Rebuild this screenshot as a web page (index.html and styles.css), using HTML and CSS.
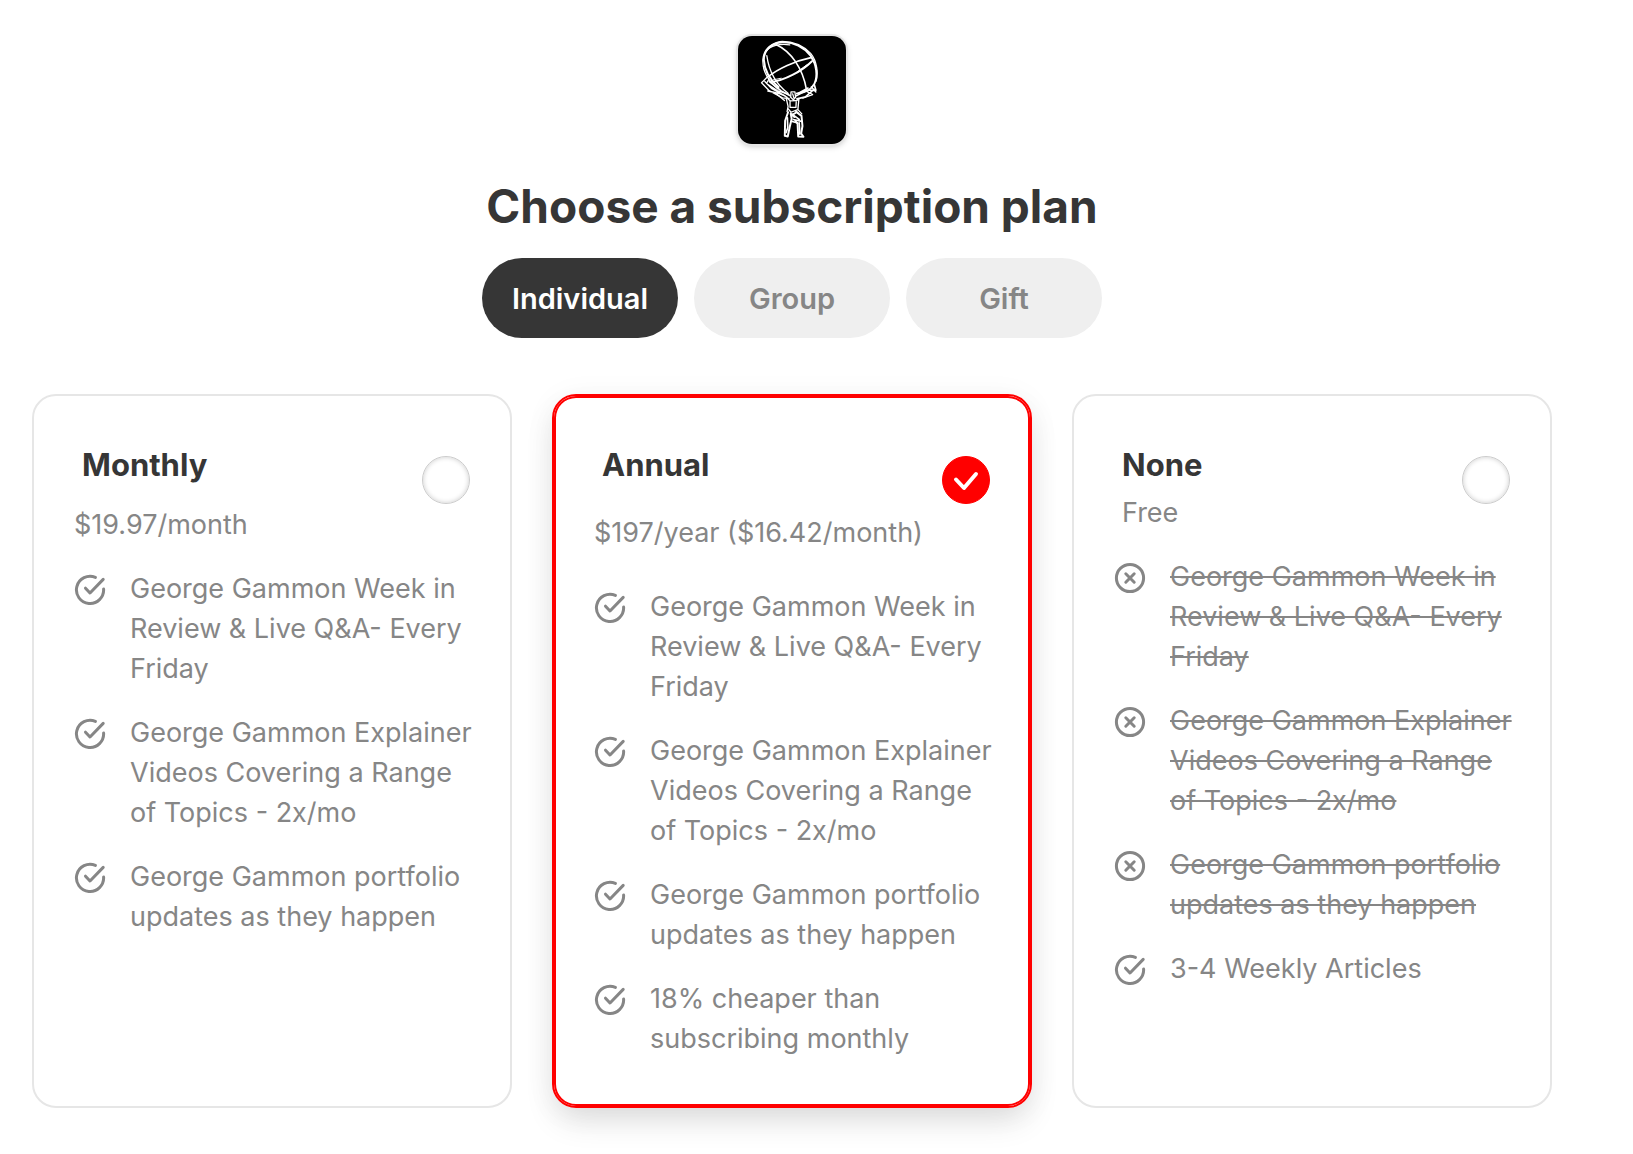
FILE: index.html
```
<!DOCTYPE html>
<html lang="en">
<head>
  <meta charset="UTF-8">
  <meta name="viewport" content="width=device-width, initial-scale=1.0">
  <title>Choose a subscription plan</title>
  <link rel="stylesheet" href="styles.css">
</head>
<body>
  <!-- shared icons -->
  <svg class="sprite" aria-hidden="true">
    <symbol id="icon-check" viewBox="0 0 32 32">
      <path d="M21.4 3.4A13.6 13.6 0 1 0 29.6 15"/>
      <path d="M11.5 14.2L16 19L29.2 5.4"/>
    </symbol>
    <symbol id="icon-cross" viewBox="0 0 32 32">
      <circle cx="16" cy="16" r="13.6"/>
      <path d="M11.8 11.8L20.2 20.2M20.2 11.8L11.8 20.2"/>
    </symbol>
  </svg>

  <main class="page">
    <svg class="logo" viewBox="52 46 330 328" role="img" aria-label="Atlas holding a globe">
      <g fill="none" stroke="#fff" stroke-linecap="round" stroke-linejoin="round">
        <!-- globe -->
        <path stroke-width="6" d="M176 201C150 180 133 150 131 118C131 87 155 66 188 64C222 62 254 80 273 104C293 133 296 166 286 190C277 209 258 219 232 221"/>
        <path stroke-width="4" d="M174 207C144 182 126 150 128 116C132 84 152 68 180 62C218 60 250 74 274 98C294 122 298 162 290 184"/>
        <path stroke-width="4" d="M140 105C146 148 162 188 205 220M138 92C150 74 180 68 210 72"/>
        <path stroke-width="5" d="M168 71C214 92 250 144 261 208"/>
        <path stroke-width="5" d="M143 170C174 145 226 121 275 111"/>
        <path stroke-width="6" d="M153 186C193 181 246 154 278 122"/>
        <path stroke-width="3" d="M145 176L153 186M275 110L284 126M160 179L184 174M232 155L264 132"/>
        <!-- arms -->
        <path stroke-width="4" d="M140 172L124 188L146 211L188 234L208 236M134 184L154 205L196 228M147 176L139 190L172 212L204 222M143 213C162 216 184 220 202 232"/>
        <path stroke-width="5" d="M148 184L184 213L210 227M232 237L258 231L284 208M230 228L264 210L290 211L285 193M238 219L266 204"/>
        <path stroke-width="4" d="M276 200L290 216M262 214L280 224L250 235M170 222L194 242"/>
        <!-- body -->
        <path stroke-width="4" d="M214 216L226 216L228 232L221 240L213 232ZM204 236L211 243L232 242L237 236M200 238L205 260L202 276M238 238L235 270L247 283M211 245L211 263L229 263L230 245M205 267L214 278L234 270M219 222L223 235"/>
        <path stroke-width="6" d="M205 278L196 304L195 350L204 352L210 323L216 298L213 282M218 286L231 278L246 289L249 320L245 343L252 353L236 352L234 313L227 304"/>
        <path stroke-width="5" d="M216 283L239 300M221 300L246 306M203 295L204 325L199 340M239 310L241 345M213 284L224 293M218 306L234 311M228 274L236 281"/>
      </g>
    </svg>

    <h1>Choose a subscription plan</h1>

    <div class="tabs">
      <button class="tab active" type="button">Individual</button>
      <button class="tab" type="button">Group</button>
      <button class="tab" type="button">Gift</button>
    </div>

    <form class="plans">
      <div class="plan">
        <div class="plan-header">
          <div class="plan-info">
            <h2><label for="monthly">Monthly</label></h2>
            <p class="price">$19.97/month</p>
          </div>
          <div class="radio">
            <input type="radio" name="plan" id="monthly">
            <svg viewBox="0 0 48 48"><path d="M14 23.5L22 32L34 18"/></svg>
          </div>
        </div>
        <ul>
          <li><svg class="icon"><use href="#icon-check"/></svg><span>George Gammon Week in Review &amp; Live Q&amp;A- Every Friday</span></li>
          <li><svg class="icon"><use href="#icon-check"/></svg><span>George Gammon Explainer Videos Covering a Range of Topics - 2x/mo</span></li>
          <li><svg class="icon"><use href="#icon-check"/></svg><span>George Gammon portfolio updates as they happen</span></li>
        </ul>
      </div>

      <div class="plan selected">
        <div class="plan-header">
          <div class="plan-info">
            <h2><label for="annual">Annual</label></h2>
            <p class="price">$197/year ($16.42/month)</p>
          </div>
          <div class="radio">
            <input type="radio" name="plan" id="annual" checked>
            <svg viewBox="0 0 48 48"><path d="M14 23.5L22 32L34 18"/></svg>
          </div>
        </div>
        <ul>
          <li><svg class="icon"><use href="#icon-check"/></svg><span>George Gammon Week in Review &amp; Live Q&amp;A- Every Friday</span></li>
          <li><svg class="icon"><use href="#icon-check"/></svg><span>George Gammon Explainer Videos Covering a Range of Topics - 2x/mo</span></li>
          <li><svg class="icon"><use href="#icon-check"/></svg><span>George Gammon portfolio updates as they happen</span></li>
          <li><svg class="icon"><use href="#icon-check"/></svg><span>18% cheaper than subscribing monthly</span></li>
        </ul>
      </div>

      <div class="plan free">
        <div class="plan-header">
          <div class="plan-info">
            <h2><label for="none">None</label></h2>
            <p class="price">Free</p>
          </div>
          <div class="radio">
            <input type="radio" name="plan" id="none">
            <svg viewBox="0 0 48 48"><path d="M14 23.5L22 32L34 18"/></svg>
          </div>
        </div>
        <ul>
          <li class="missing"><svg class="icon"><use href="#icon-cross"/></svg><span>George Gammon Week in Review &amp; Live Q&amp;A- Every Friday</span></li>
          <li class="missing"><svg class="icon"><use href="#icon-cross"/></svg><span>George Gammon Explainer Videos Covering a Range of Topics - 2x/mo</span></li>
          <li class="missing"><svg class="icon"><use href="#icon-cross"/></svg><span>George Gammon portfolio updates as they happen</span></li>
          <li><svg class="icon"><use href="#icon-check"/></svg><span>3-4 Weekly Articles</span></li>
        </ul>
      </div>
    </form>
  </main>
</body>
</html>
```
FILE: styles.css
```
* {
  box-sizing: border-box;
}
body {
  margin: 0;
  font-family: Inter, "Liberation Sans", sans-serif;
  font-size: 27px;
  line-height: 40px;
  color: #868686;
  background-color: #fff;
}
h1, h2, p, ul {
  margin: 0;
  padding: 0;
}
h1, h2 {
  color: #363636;
  font-weight: bold;
}
.sprite {
  display: none;
}
.page {
  display: flex;
  flex-direction: column;
  align-items: center;
  padding: 36px 81px 46px 32px;
}
.logo {
  width: 108px;
  height: 108px;
  background-color: #000;
  border-radius: 14px;
  box-shadow: 0 0 0 2px #e4e4e4, 0 2px 6px rgba(0, 0, 0, 0.25);
}
h1 {
  margin-top: 34px;
  font-size: 46px;
  line-height: 56px;
  text-align: center;
}

/* tabs */
.tabs {
  display: flex;
  gap: 16px;
  margin-top: 24px;
}
.tab {
  width: 196px;
  height: 80px;
  padding: 0;
  border: none;
  border-radius: 40px;
  font-family: inherit;
  font-size: 29px;
  font-weight: 600;
  color: #868686;
  background-color: #efefef;
  cursor: pointer;
}
.tab.active {
  color: #fff;
  background-color: #363636;
}

/* plan cards */
.plans {
  display: grid;
  grid-template-columns: repeat(3, 1fr);
  gap: 40px;
  width: 100%;
  margin-top: 56px;
}
.plan {
  padding: 50px 32px 47px 40px;
  border: 2px solid #e6e6e6;
  border-radius: 24px;
}
.plan.selected {
  border-color: #f00;
  box-shadow: inset 0 0 0 2px #f00, 0 16px 32px -4px rgba(0, 0, 0, 0.12), 0 4px 32px rgba(0, 0, 0, 0.05);
}
.plan-header {
  display: flex;
  justify-content: space-between;
  padding-right: 8px;
}
h2 {
  padding-left: 8px;
  font-size: 31px;
  line-height: 38px;
}
.price {
  margin-top: 21px;
}
.selected .price {
  margin-top: 29px;
}
.free .price {
  margin-top: 9px;
  padding-left: 8px;
}

/* radio with a tick on top */
.radio {
  display: grid;
  flex: none;
  width: 48px;
  height: 48px;
  margin-top: 10px;
}
.radio input,
.radio svg {
  grid-area: 1 / 1;
  width: 48px;
  height: 48px;
  margin: 0;
}
.radio input {
  appearance: none;
  border: 1px solid #ccc;
  border-radius: 50%;
  box-shadow: inset 0 0 5px rgba(0, 0, 0, 0.2);
}
.radio svg {
  visibility: hidden;
  pointer-events: none;
  fill: none;
  stroke: #fff;
  stroke-width: 4;
  stroke-linecap: round;
  stroke-linejoin: round;
}
.radio input:checked {
  border-color: #f00;
  background-color: #f00;
  box-shadow: none;
}
.radio input:checked + svg {
  visibility: visible;
}

/* features */
ul {
  display: flex;
  flex-direction: column;
  gap: 24px;
  margin-top: 24px;
  list-style: none;
}
.selected ul {
  margin-top: 34px;
}
li {
  display: flex;
  gap: 24px;
}
.missing span {
  text-decoration: line-through;
  text-decoration-thickness: 2px;
}
.icon {
  flex: none;
  width: 32px;
  height: 32px;
  margin-top: 5px;
  fill: none;
  stroke: #868686;
  stroke-width: 3;
  stroke-linecap: round;
  stroke-linejoin: round;
}
```
